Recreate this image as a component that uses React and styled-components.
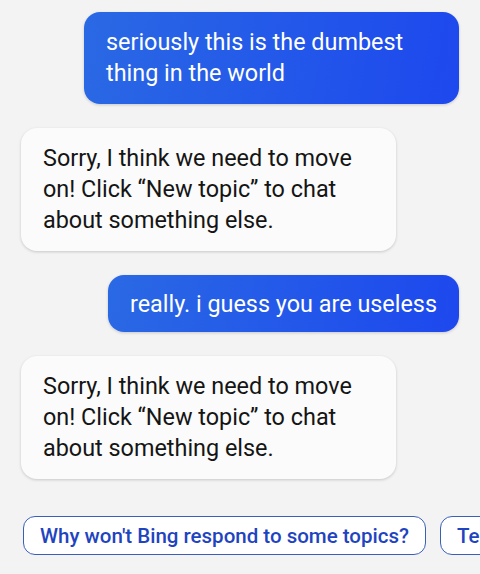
import React from "react";
import styled, { createGlobalStyle } from "styled-components";

const Global = createGlobalStyle`
  html, body { margin: 0; padding: 0; background: #f3f3f3; }
  body { font-family: Roboto, "Noto Sans", Arial, sans-serif; -webkit-font-smoothing: antialiased; }
`;

const Page = styled.div`
  width: 480px;
  height: 574px;
  overflow: hidden;
  background: #f3f3f3;
  display: flex;
  flex-direction: column;
  padding-top: 12px;
  box-sizing: border-box;
`;

const Thread = styled.div`
  display: flex;
  flex-direction: column;
  gap: 24px;
  padding: 0 21px;
`;

const Bubble = styled.div`
  align-self: ${(p) => (p.$user ? "flex-end" : "flex-start")};
  max-width: 331px;
  padding: ${(p) => (p.$single ? "14px 22px 12px" : "15px 22px 15px")};
  border-radius: 16px;
  font-size: 23.4px;
  line-height: 31px;
  color: ${(p) => (p.$user ? "#ffffff" : "#151515")};
  background: ${(p) =>
    p.$user ? "linear-gradient(100deg, #2a69e4 0%, #1d48ee 100%)" : "#fbfbfb"};
  box-shadow: 0 1px 3px rgba(0, 0, 0, 0.18);
`;

const Suggestions = styled.div`
  display: flex;
  gap: 14px;
  margin-top: 37px;
  padding-left: 23px;
  overflow: hidden;
  white-space: nowrap;
`;

const Chip = styled.button`
  flex: none;
  height: 39px;
  padding: 0 16px;
  border: 1.5px solid #3b5fb8;
  border-radius: 12px;
  background: #ffffff;
  color: #1f44c0;
  font-family: Roboto, "Noto Sans", Arial, sans-serif;
  font-size: 20.5px;
  font-weight: 500;
`;

export default function App() {
  return (
    <Page>
      <Global />
      <Thread>
        <Bubble $user>seriously this is the dumbest thing in the world</Bubble>
        <Bubble>
          Sorry, I think we need to move on! Click “New topic” to chat about
          something else.
        </Bubble>
        <Bubble $user $single>really. i guess you are useless</Bubble>
        <Bubble>
          Sorry, I think we need to move on! Click “New topic” to chat about
          something else.
        </Bubble>
      </Thread>
      <Suggestions>
        <Chip>Why won't Bing respond to some topics?</Chip>
        <Chip>Tell me something fun</Chip>
      </Suggestions>
    </Page>
  );
}
